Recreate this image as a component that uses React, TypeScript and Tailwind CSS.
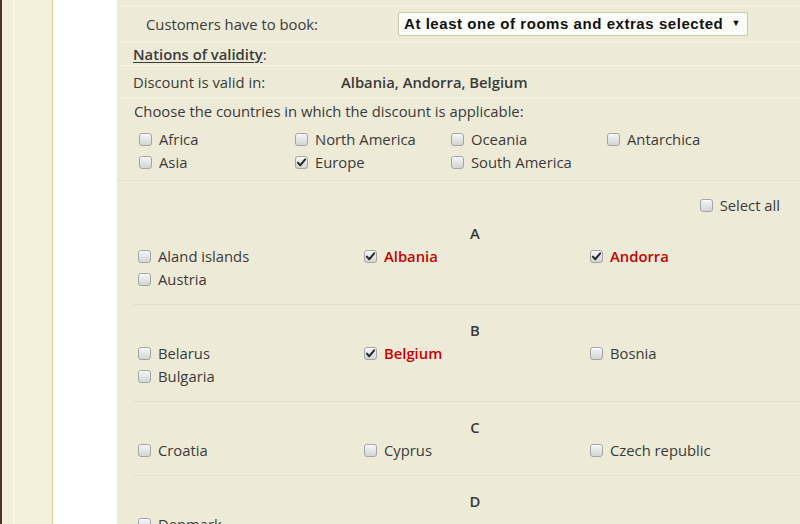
import React from "react";

type Country = { name: string; checked?: boolean };

const continents: Country[][] = [
    [{ name: "Africa" }, { name: "Asia" }],
    [{ name: "North America" }, { name: "Europe", checked: true }],
    [{ name: "Oceania" }, { name: "South America" }],
    [{ name: "Antarchica" }],
];

const sections: { letter: string; countries: Country[] }[] = [
    {
        letter: "A",
        countries: [
            { name: "Aland islands" },
            { name: "Albania", checked: true },
            { name: "Andorra", checked: true },
            { name: "Austria" },
        ],
    },
    {
        letter: "B",
        countries: [
            { name: "Belarus" },
            { name: "Belgium", checked: true },
            { name: "Bosnia" },
            { name: "Bulgaria" },
        ],
    },
    {
        letter: "C",
        countries: [{ name: "Croatia" }, { name: "Cyprus" }, { name: "Czech republic" }],
    },
    {
        letter: "D",
        countries: [{ name: "Denmark" }],
    },
];

function Checkbox({ checked }: { checked?: boolean }) {
    return (
        <span className="relative inline-flex h-[13px] w-[13px] shrink-0 items-center justify-center rounded-[3px] border border-[#a4a4a4] bg-gradient-to-b from-[#f6f6f6] to-[#d4d4d4] shadow-[inset_0_1px_0_#fff]">
            {checked && (
                <svg viewBox="0 0 12 12" className="h-[11px] w-[11px]">
                    <path d="M2 6.2 L4.6 9 L10 2.6" fill="none" stroke="#2b2b2b" strokeWidth="2.2" strokeLinecap="round" strokeLinejoin="round" />
                </svg>
            )}
        </span>
    );
}

// highlight = selected country shown in red
function CheckItem({ item, highlight }: { item: Country; highlight?: boolean }) {
    return (
        <label className="flex h-[23px] items-center gap-[7px]">
            <Checkbox checked={item.checked} />
            <span className={highlight && item.checked ? "font-semibold text-[#c80000]" : ""}>{item.name}</span>
        </label>
    );
}

export default function App() {
    return (
        <div className="flex h-[524px] w-[800px] overflow-hidden bg-white font-['Open_Sans',sans-serif] text-[14.8px] text-[#3a3a3a]">
            <div className="w-[2px] bg-[#4a3228]" />
            <div className="w-[11px] bg-[#f3efd9]" />
            <div className="w-[1px] bg-[#fcfbf2]" />
            <div className="w-[38px] bg-[#f5f0d9]" />
            <div className="w-[1px] bg-[#d9d6a6]" />
            <div className="w-[64px] bg-white" />
            <div className="min-w-0 flex-1 overflow-hidden bg-[#eeead8]">
                <div className="h-[6px] border-b border-[#f5f2e4]" />

                <div className="flex h-[37px] items-center border-b border-[#f5f2e4]">
                    <div className="w-[281px] pl-[29px]">Customers have to book:</div>
                    <div className="flex h-[24px] w-[350px] items-center justify-between rounded-[2px] border border-[#cdc9ae] bg-[#fbfbf8] pl-[5px] pr-[6px] font-['Liberation_Sans',Arial,sans-serif] text-[15px] font-bold tracking-[0.55px] text-[#111]">
                        <span>At least one of rooms and extras selected</span>
                        <span className="text-[9px]">▼</span>
                    </div>
                </div>

                <div className="flex h-[23px] items-center border-b border-[#f5f2e4] pl-[16px]">
                    <span className="font-semibold underline underline-offset-2">Nations of validity</span>
                    <span>:</span>
                </div>

                <div className="flex h-[33px] items-center border-b border-[#f5f2e4] pl-[16px]">
                    <div className="w-[208px]">Discount is valid in:</div>
                    <div className="font-semibold">Albania, Andorra, Belgium</div>
                </div>

                <div className="border-b border-[#e4e0c9] pb-[6px] pl-[17px] pt-[1px]">
                    <div className="h-[22px] leading-[22px]">Choose the countries in which the discount is applicable:</div>
                    <div className="mt-[6px] flex pl-[5px]">
                        {continents.map((col, i) => (
                            <div key={i} className="w-[156px]">
                                {col.map((c) => (
                                    <CheckItem key={c.name} item={c} />
                                ))}
                            </div>
                        ))}
                    </div>
                </div>

                <div className="flex justify-end pr-[20px] pt-[13px]">
                    <CheckItem item={{ name: "Select all" }} />
                </div>

                {sections.map((s, i) => (
                    <div key={s.letter} className={`ml-[16px] border-b border-[#e4e0c9] pb-[13px] pl-[5px] ${i === 0 ? "pt-[5px]" : "pt-[14px]"}`}>
                        <div className="h-[23px] w-[674px] text-center font-semibold leading-[23px]">{s.letter}</div>
                        <div className="grid grid-cols-[226px_226px_226px]">
                            {s.countries.map((c) => (
                                <CheckItem key={c.name} item={c} highlight />
                            ))}
                        </div>
                    </div>
                ))}
            </div>
        </div>
    );
}
